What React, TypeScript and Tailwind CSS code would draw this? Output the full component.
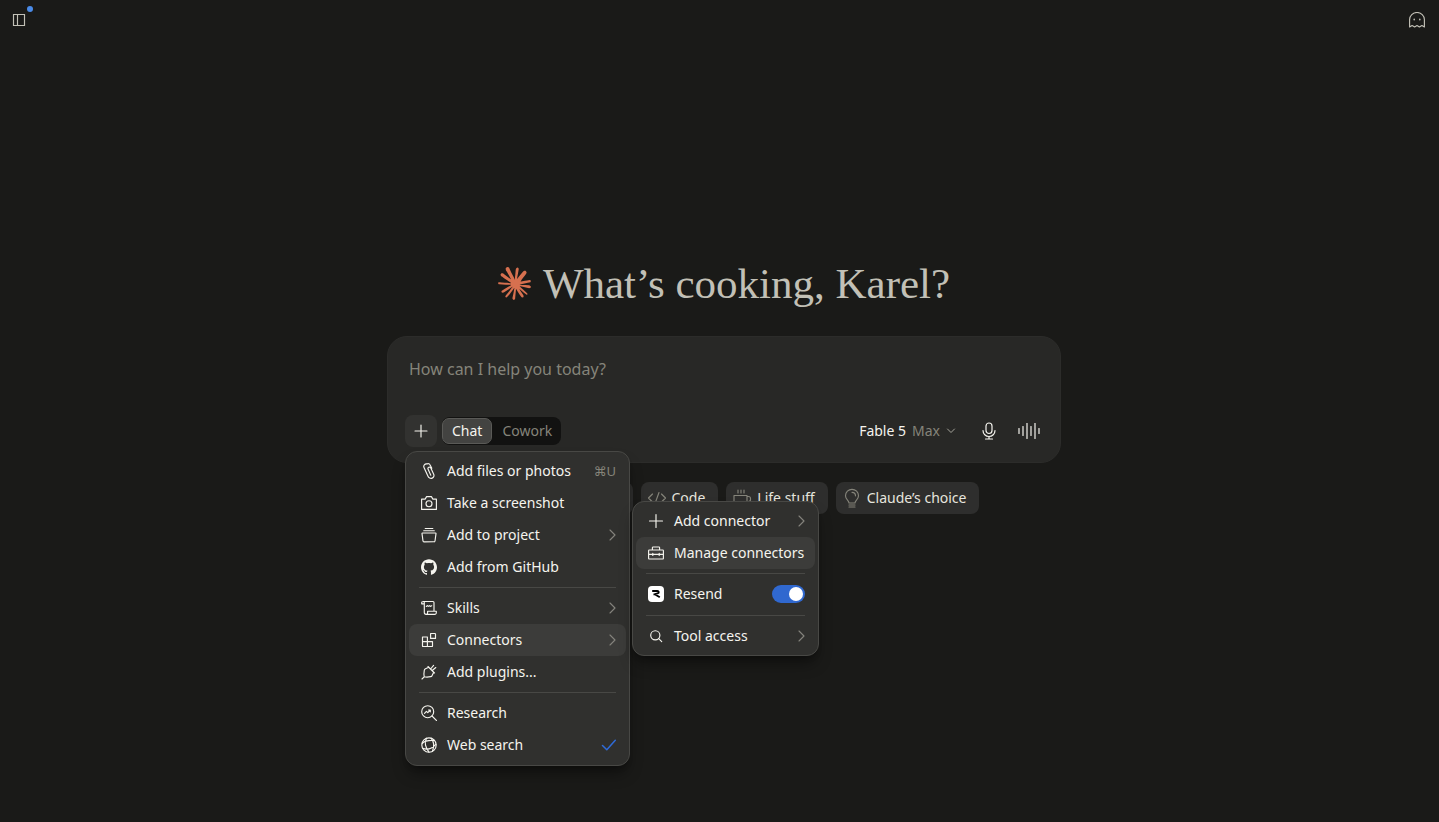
import React from "react";
import { SiClaude, SiGithub } from "react-icons/si";

type IconProps = { children: React.ReactNode; className?: string; size?: number; box?: string };

function Icon({ children, className = "", size = 16, box = "0 0 16 16" }: IconProps) {
  return (
    <svg
      width={size}
      height={size}
      viewBox={box}
      fill="none"
      stroke="currentColor"
      strokeWidth="1.15"
      strokeLinecap="round"
      strokeLinejoin="round"
      className={`shrink-0 ${className}`}
      aria-hidden="true"
    >
      {children}
    </svg>
  );
}

const Clip = () => (
  <Icon>
    <path d="M10.800 5.200 9.100 1.900A2.200 2.200 0 0 0 6 .9h0A2.600 2.600 0 0 0 3 4.500l4 8.800a3.200 3.200 0 0 0 4.200 1.800h0a2.800 2.800 0 0 0 1.500-3.800L9.800 5a1.500 1.500 0 0 0-2-.8h0a1.500 1.500 0 0 0-.7 2l2.700 6" />
  </Icon>
);
const Camera = () => (
  <Icon>
    <path d="M.6 4.100h3.500l1.500-2.500h4.800l1.500 2.500h3.500v10.300H.6z" />
    <circle cx="8" cy="8.700" r="3" />
  </Icon>
);
const Project = () => (
  <Icon>
    <path d="M4.200 1.500h7.600M2.700 3.700h10.600M1.600 6h12.800a.6.6 0 0 1 .6.700l-1 7.300a1 1 0 0 1-1 .8H3a1 1 0 0 1-1-.8L1 6.700a.6.6 0 0 1 .6-.7z" />
  </Icon>
);
const Scroll = () => (
  <Icon>
    <path d="M3.300 12.500V3.200A1.300 1.300 0 0 0 2 1.500a1.300 1.300 0 0 0-1.300 1.300v1h2.500M2 1.500h10a1 1 0 0 1 1 1v8.300M3.300 12.500a1.700 1.700 0 0 0 1.700 1.800h8.600a1.600 1.600 0 0 0 1.700-1.700v-1.400H6.600v1.400a1.600 1.600 0 0 1-1.600 1.700" />
    <path d="M5.300 6.400l1.200-.8.9.8 1-.8.900.8 1.400-.6" />
  </Icon>
);
const Blocks = () => (
  <Icon>
    <path d="M1.500 5h4.900v9.500H2.100a.6.6 0 0 1-.6-.6zM1.500 9.600h10v4.300a.6.6 0 0 1-.6.6H6.400M9.600 1.500h4.300a.6.600 0 0 1 .6.600v4.300H9.600z" />
  </Icon>
);
const Plug = () => (
  <Icon>
    <path d="M7 2.500l6.500 6.500M7.800 3.300 4.500 4.700a2 2 0 0 0-1.200 1.600L2.900 10 3.200 12.800l2.800.3 3.600-.5a2 2 0 0 0 1.500-1l1.600-3.400M1 15l2.200-2.200M9.600 5l3-3.600M11.200 6.500l3.600-3" />
  </Icon>
);
const Research = () => (
  <Icon>
    <circle cx="6.700" cy="6.700" r="6" />
    <path d="M11 11l4.600 4.600M3.500 8.300l1.900-2 1.400 1.300 2.400-2.500M7.500 5h1.800v1.800" />
  </Icon>
);
const Globe = () => (
  <Icon>
    <circle cx="8" cy="8" r="7.200" />
    <path d="M1.200 6.500C4 3.500 8 3.200 13 3.500M5.500 1.300C3.500 5 4.500 10.500 8 15.100M10 1.200c3 3.500 3.500 8 1.500 13M1.800 11.300c4 1.700 9 .5 13-4" />
  </Icon>
);
const Toolbox = () => (
  <Icon>
    <path d="M1.300 5h13.400a.7.700 0 0 1 .7.700v7.600a.7.700 0 0 1-.7.700H1.300a.7.700 0 0 1-.7-.7V5.700a.7.700 0 0 1 .7-.7zM4.400 5V2.700a.7.700 0 0 1 .7-.7h5.800a.7.700 0 0 1 .7.700V5M.6 9.400h14.800M4.800 8.300v2.200M11.200 8.300v2.200" />
  </Icon>
);
const Plus = () => (
  <Icon>
    <path d="M8 1.500v13M1.500 8h13" />
  </Icon>
);
const Search = () => (
  <Icon>
    <circle cx="7.300" cy="7.300" r="4.600" />
    <path d="M10.700 10.700l3 3" />
  </Icon>
);
const Chevron = () => (
  <svg width="8" height="12" viewBox="0 0 8 12" fill="none" stroke="currentColor" strokeWidth="1.1" strokeLinecap="round" strokeLinejoin="round" className="shrink-0 text-[#85847d]" aria-hidden="true">
    <path d="M2 1 7 6l-5 5" />
  </svg>
);
const ResendMark = () => (
  <span className="flex size-4 shrink-0 items-center justify-center rounded bg-white text-black">
    <svg width="16" height="16" viewBox="0 0 16 16" fill="none" stroke="currentColor" strokeWidth="1.900" aria-hidden="true">
      <path d="M4.200 5h5c2 0 2 2 .4 2.400L5.500 8.600M6.800 8.300 11.800 11.300" strokeLinejoin="round" />
    </svg>
  </span>
);

type ItemProps = { icon: React.ReactNode; label: string; end?: React.ReactNode; active?: boolean };

function MenuItem({ icon, label, end, active }: ItemProps) {
  return (
    <button
      type="button"
      role="menuitem"
      className={`flex h-8 w-full items-center gap-2.5 rounded-lg pr-2.5 pl-3 text-left ${active ? "bg-[#3c3c3a]" : ""}`}
    >
      {icon}
      <span className="grow whitespace-nowrap">{label}</span>
      {end}
    </button>
  );
}

const Divider = () => <div role="separator" className="mx-2.5 my-1 h-px bg-[#484845]" />;

function Chip({ icon, label }: { icon: React.ReactNode; label: string }) {
  return (
    <button type="button" className="flex h-8 items-center gap-[5px] rounded-lg bg-[#2e2e2d] pr-[13px] pl-1.5 text-sm text-[#e6e5de]">
      <span className="flex w-5 justify-center text-[#85847a]">{icon}</span>
      {label}
    </button>
  );
}

function IconChip({ icon, name }: { icon: React.ReactNode; name: string }) {
  return (
    <button type="button" aria-label={name} className="flex h-8 w-[78px] items-center rounded-lg bg-[#2e2e2d] pl-2 text-[#85847a]">
      {icon}
    </button>
  );
}

const bars = [[1, 5], [5, 9], [9, 15], [13, 9], [17, 15], [21, 5]];

export default function App() {
  return (
    <div className="flex min-h-screen flex-col bg-[#1a1a18] font-['Noto_Sans',sans-serif] text-sm text-[#f5f4ee]">
      <header className="flex h-10 items-center justify-between px-2.5">
        <button type="button" aria-label="Toggle sidebar" className="relative p-px text-[#c2c0b6]">
          <Icon>
            <path d="M2.500 2.500h11v11h-11zM6.500 2.500v11" strokeLinejoin="miter" />
          </Icon>
          <span className="absolute -top-[5px] -right-[5px] size-1.5 rounded-full bg-[#4a8be8]" />
        </button>
        <button type="button" aria-label="Incognito chat" className="pr-1 text-[#c2c0b6]">
          <Icon>
            <path d="M.6 15V7.500a7.400 7 0 0 1 14.800 0V15l-2.500-1.500L10.400 15 8 13.500 5.600 15l-2.500-1.500z" />
            <path d="M5.200 7.200v.6M10.800 7.200v.6" strokeWidth="1.500" />
          </Icon>
        </button>
      </header>

      <main className="flex flex-col items-center pt-[215px] pl-[9px]">
        <h1 className="flex h-14 items-center gap-3 font-['Liberation_Serif',serif] text-[43px] leading-none whitespace-nowrap text-[#c2c0b6]">
          <SiClaude size={33} className="text-[#d6704f]" aria-hidden="true" />
          What’s cooking, Karel?
        </h1>

        <form className="mt-[25px] w-full max-w-[674px] rounded-[20px] border border-[#2c2c2a] bg-[#282826] px-[17px] pt-5 pb-[15px]" onSubmit={(e) => e.preventDefault()}>
          <textarea
            aria-label="Message"
            placeholder="How can I help you today?"
            className="block h-[58px] w-full resize-none bg-transparent px-1 text-base leading-6 outline-none placeholder:text-[#85847a]"
          />
          <div className="flex items-center">
            <div className="relative">
              <button type="button" aria-label="Add" className="flex size-8 items-center justify-center rounded-lg bg-[#323230]">
                <Icon>
                  <path d="M8 2v12M2 8h12" />
                </Icon>
              </button>

              <div role="menu" aria-label="Add" className="absolute top-9 left-0 z-10 w-[225px] rounded-xl border border-[#484845] bg-[#30302e] p-[3px] pb-1 shadow-lg shadow-black/40">
                <MenuItem icon={<Clip />} label="Add files or photos" end={<kbd className="font-['Noto_Sans','DejaVu_Sans',sans-serif] text-[13px] text-[#85847a]">⌘U</kbd>} />
                <MenuItem icon={<Camera />} label="Take a screenshot" />
                <MenuItem icon={<Project />} label="Add to project" end={<Chevron />} />
                <MenuItem icon={<SiGithub size={16} className="shrink-0" aria-hidden="true" />} label="Add from GitHub" />
                <Divider />
                <MenuItem icon={<Scroll />} label="Skills" end={<Chevron />} />
                <MenuItem icon={<Blocks />} label="Connectors" end={<Chevron />} active />
                <MenuItem icon={<Plug />} label="Add plugins..." />
                <Divider />
                <MenuItem icon={<Research />} label="Research" />
                <MenuItem
                  icon={<Globe />}
                  label="Web search"
                  end={
                    <Icon className="text-[#2f6bd8]">
                      <path d="M2.500 8.500l4.300 4.300L15.300 3.300" strokeWidth="1.500" />
                    </Icon>
                  }
                />
              </div>

              <div role="menu" aria-label="Connectors" className="absolute top-[86px] left-[227px] z-20 w-[187px] rounded-xl border border-[#484845] bg-[#30302e] p-[3px] shadow-lg shadow-black/40">
                <MenuItem icon={<Plus />} label="Add connector" end={<Chevron />} />
                <MenuItem icon={<Toolbox />} label="Manage connectors" active />
                <Divider />
                <label className="flex h-[33px] items-center gap-2.5 pr-2.5 pb-px pl-3">
                  <ResendMark />
                  <span className="grow">Resend</span>
                  <input type="checkbox" role="switch" defaultChecked className="peer sr-only" />
                  <span className="flex h-[18px] w-[33px] items-center rounded-full bg-[#55554f] px-0.5 peer-checked:justify-end peer-checked:bg-[#3068cf]">
                    <span className="size-3.5 rounded-full bg-white" />
                  </span>
                </label>
                <Divider />
                <MenuItem icon={<Search />} label="Tool access" end={<Chevron />} />
              </div>
            </div>

            <div className="ml-[5px] flex h-7 rounded-lg bg-[#121211] py-px text-sm">
              <button type="button" aria-pressed="true" className="rounded-[7px] border border-[#5a5a57] bg-[#434341] px-[9px]">
                Chat
              </button>
              <button type="button" aria-pressed="false" className="pr-[9px] pl-2.5 text-[#85847a]">
                Cowork
              </button>
            </div>

            <button type="button" className="ml-auto flex h-8 items-center gap-1.5">
              <span>Fable 5</span>
              <span className="text-[#85847a]">Max</span>
              <svg width="10" height="6" viewBox="0 0 10 6" fill="none" stroke="currentColor" strokeLinecap="round" strokeLinejoin="round" className="text-[#a5a49b]" aria-hidden="true">
                <path d="M1.500 1 5 4.500 8.500 1" />
              </svg>
            </button>
            <button type="button" aria-label="Dictate" className="ml-6 flex h-8 items-center">
              <Icon size={18} box="0 0 18 18">
                <path d="M9 1a3 3 0 0 1 3 3v4.500a3 3 0 0 1-6 0V4a3 3 0 0 1 3-3zM3 8.500a6 6 0 0 0 12 0M9 14.500V17M5.500 17h7" strokeWidth="1.200" />
              </Icon>
            </button>
            <button type="button" aria-label="Voice mode" className="mr-[3px] ml-5 flex h-8 items-center">
              <svg width="22" height="16" viewBox="0 0 22 16" stroke="currentColor" strokeWidth="1.200" strokeLinecap="round" aria-hidden="true">
                {bars.map(([x, h]) => (
                  <path key={x} d={`M${x} ${8 - h / 2}v${h}`} />
                ))}
              </svg>
            </button>
          </div>
        </form>

        <div className="mt-[19px] flex gap-2">
          <IconChip icon={<Scroll />} name="Write" />
          <IconChip icon={<Blocks />} name="Learn" />
          <Chip
            icon={
              <Icon size={20} box="0 0 20 20">
                <path d="M5.500 6 1.500 10l4 4M14.500 6l4 4-4 4M12 4.500l-4 11" />
              </Icon>
            }
            label="Code"
          />
          <Chip
            icon={
              <Icon size={20} box="0 0 20 20">
                <path d="M2 7.500h13v7a2 2 0 0 1-2 2H4a2 2 0 0 1-2-2zM15 8.500h1.500a2 2 0 0 1 2 2v1a2 2 0 0 1-2 2H15M6 2v3M9 2v3M12 2v3" />
              </Icon>
            }
            label="Life stuff"
          />
          <Chip
            icon={
              <Icon size={20} box="0 0 20 20">
                <path d="M7 15c0-2.500-3.500-3.500-3.500-7.200a6.500 6.500 0 0 1 13 0c0 3.700-3.500 4.700-3.500 7.200zM7 17h6M7 19h6M10 4.300a3.500 3.500 0 0 1 3.500 3.500" />
              </Icon>
            }
            label="Claude’s choice"
          />
        </div>
      </main>
    </div>
  );
}
